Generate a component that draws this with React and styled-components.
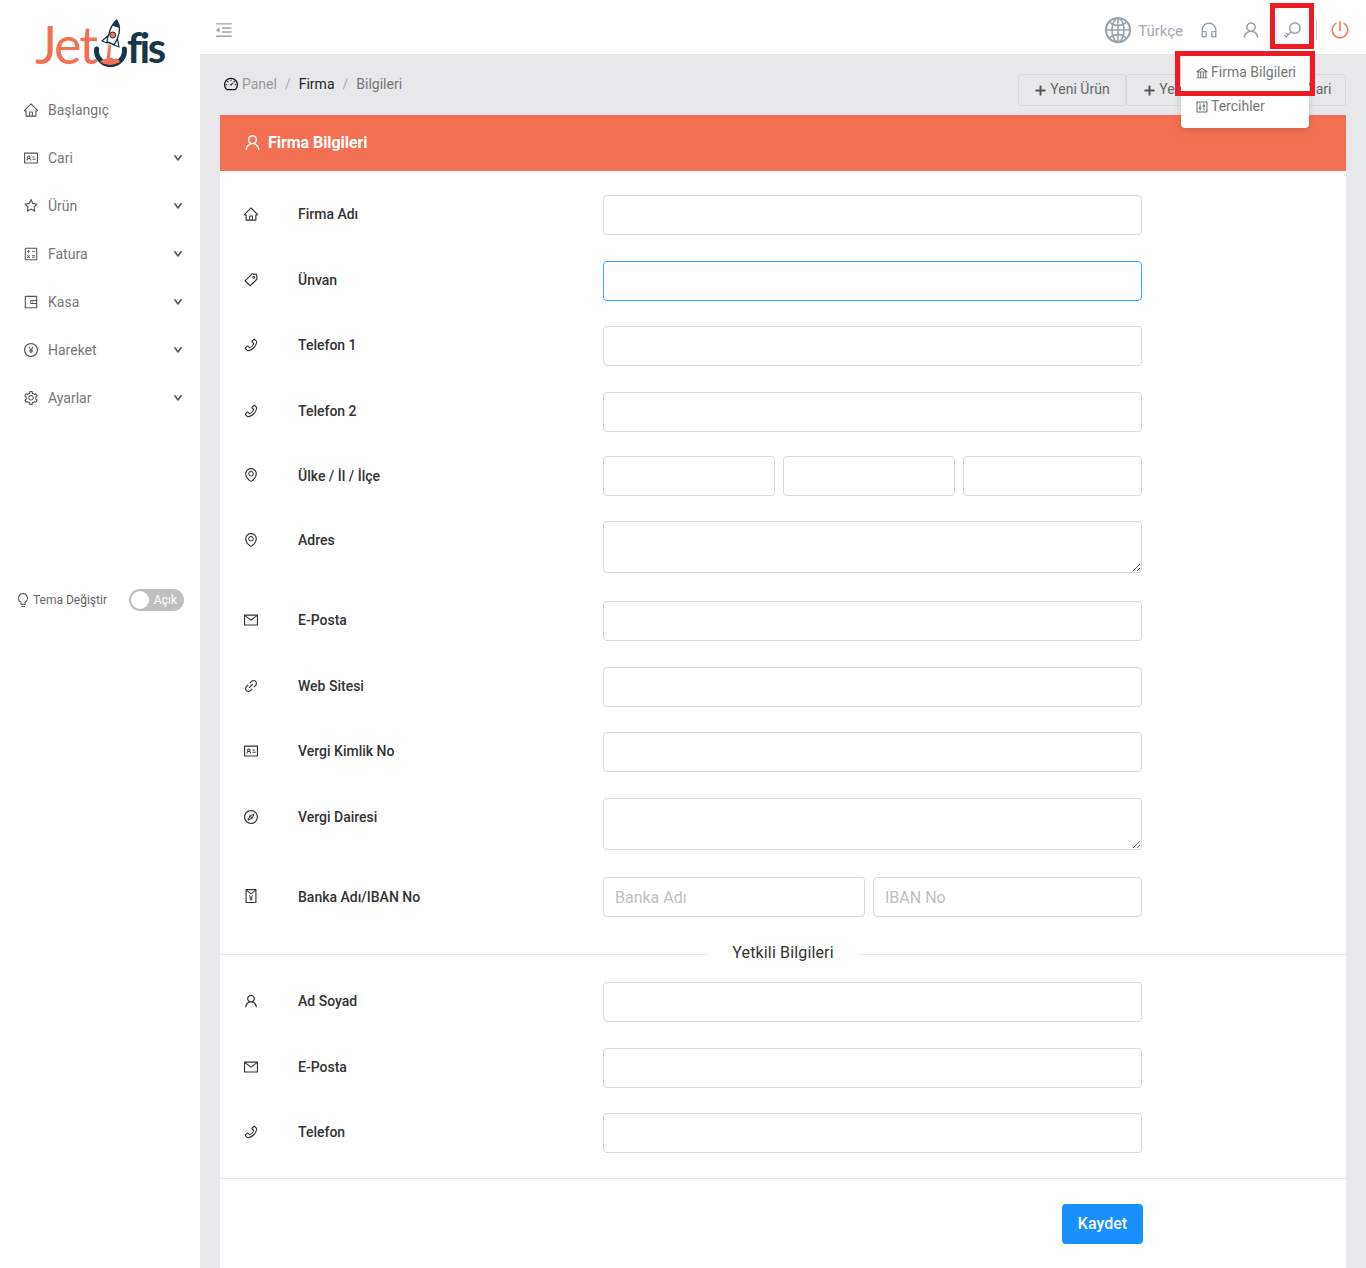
import React from 'react';
import styled, { createGlobalStyle } from 'styled-components';
import {
  AiOutlineHome,
  AiOutlineIdcard,
  AiOutlineStar,
  AiOutlineCalculator,
  AiOutlineWallet,
  AiOutlinePayCircle,
  AiOutlineSetting,
  AiOutlineBulb,
  AiOutlineDashboard,
  AiOutlineUser,
  AiOutlineTag,
  AiOutlinePhone,
  AiOutlineEnvironment,
  AiOutlineMail,
  AiOutlineLink,
  AiOutlineCompass,
  AiOutlineRedEnvelope,
  AiOutlineGlobal,
  AiOutlineCustomerService,
  AiOutlineKey,
  AiOutlinePoweroff,
  AiOutlineBank,
  AiOutlineControl,
  AiOutlineMenuFold,
  AiOutlinePlus,
  AiOutlineDown,
} from 'react-icons/ai';

const GlobalStyle = createGlobalStyle`
  html, body {
    margin: 0;
    height: 1268px;
    overflow: hidden;
    background: #e7e8ea;
    font-family: Roboto, "Liberation Sans", sans-serif;
  }
  * { box-sizing: border-box; }
`;

const Shell = styled.div`
  display: flex;
  height: 1268px;
  overflow: hidden;
  position: relative;
`;

const Sidebar = styled.aside`
  width: 200px;
  flex: none;
  background: #fff;
`;

const LogoWrap = styled.div`
  height: 86px;
  display: flex;
  align-items: flex-start;
  padding: 18px 0 0 35px;
`;

const LogoWord = styled.span`
  font-family: Lato, sans-serif;
  font-size: ${(p) => (p.$dark ? 42 : 52)}px;
  line-height: 58px;
  font-weight: ${(p) => (p.$dark ? 700 : 400)};
  color: ${(p) => (p.$dark ? '#17384a' : '#f47053')};
  letter-spacing: ${(p) => (p.$dark ? '-2.5px' : '-2px')};
  margin-top: ${(p) => (p.$dark ? -0.5 : -3)}px;
  margin-left: ${(p) => (p.$dark ? -2 : 0)}px;
`;

const LogoMark = styled.svg`
  width: 36px;
  height: 52px;
  flex: none;
  margin-left: -3px;
`;

const NavItem = styled.div`
  height: 48px;
  display: flex;
  align-items: center;
  padding: 0 16px 0 23px;
  font-size: 14px;
  color: #777;
  svg:first-child {
    font-size: 16px;
    color: #555;
    margin-right: 9px;
  }
`;

const NavLabel = styled.span`
  flex: 1;
`;

const Chevron = styled(AiOutlineDown)`
  font-size: 10px;
  color: #555;
  stroke: #555;
  stroke-width: 100;
  margin-right: 1px;
`;

const ThemeRow = styled.div`
  display: flex;
  align-items: center;
  margin-top: 167px;
  padding: 0 16px 0 17px;
  font-size: 12px;
  color: #666;
  svg {
    font-size: 16px;
    margin-left: -2px;
    margin-right: 2px;
  }
`;

const ThemeLabel = styled.span`
  flex: 1;
`;

const Toggle = styled.div`
  width: 55px;
  height: 22px;
  border-radius: 11px;
  background: #bfbfbf;
  color: #fff;
  display: flex;
  align-items: center;
  justify-content: space-between;
  padding: 0 7px 0 2px;
`;

const ToggleThumb = styled.span`
  width: 18px;
  height: 18px;
  border-radius: 50%;
  background: #fff;
`;

const Main = styled.div`
  flex: 1;
  min-width: 0;
`;

const TopBar = styled.header`
  height: 54px;
  background: #fff;
  display: flex;
  align-items: center;
  padding: 6px 7px 0 14px;
`;

const TopBarSpacer = styled.div`
  flex: 1;
`;

const TopIcon = styled.span`
  display: flex;
  align-items: center;
  justify-content: center;
  width: ${(p) => p.$w || 42}px;
  font-size: ${(p) => p.$size || 20}px;
  color: ${(p) => p.$color || '#9aa3ad'};
`;

const LangText = styled.span`
  font-size: 15px;
  color: #a3abb5;
  margin: 1px 5px 0 5px;
`;

const VLine = styled.span`
  width: 1px;
  height: 20px;
  background: #c4c8cc;
  margin: 0 4px 0 2px;
`;

const Content = styled.div`
  padding: 20px 20px 0 20px;
`;

const CrumbRow = styled.div`
  height: 41px;
  display: flex;
  justify-content: space-between;
  align-items: flex-start;
`;

const Crumbs = styled.div`
  display: flex;
  align-items: center;
  height: 20px;
  padding-left: 3px;
  font-size: 14px;
  color: #999;
  svg {
    font-size: 16px;
    color: #111;
    margin-right: 3px;
  }
`;

const CrumbSep = styled.span`
  margin: 0 8px;
  color: #aaa;
`;

const Crumb = styled.span`
  color: ${(p) => p.$color || '#999'};
`;

const ActionGroup = styled.div`
  display: flex;
`;

const ActionButton = styled.div`
  height: 32px;
  width: ${(p) => p.$w}px;
  display: flex;
  align-items: center;
  justify-content: center;
  gap: 3px;
  padding-bottom: 2px;
  border: 1px solid #d9d9d9;
  border-radius: 3px;
  font-size: 14px;
  color: #666;
  svg {
    font-size: 13px;
    color: #555;
    stroke: #555;
    stroke-width: 80;
    margin-top: 2px;
  }
`;

const Card = styled.section`
  background: #fff;
  height: 1153px;
`;

const CardHead = styled.div`
  height: 56px;
  background: #f47053;
  color: #fff;
  display: flex;
  align-items: center;
  gap: 6px;
  padding: 0 0 2px 23px;
  font-size: 16px;
  font-weight: 700;
  letter-spacing: -0.05px;
  svg {
    font-size: 19px;
  }
`;

const CardBody = styled.div`
  padding-top: 24px;
`;

const Row = styled.div`
  display: grid;
  grid-template-columns: 61px 322px 539px;
  align-items: start;
  margin-bottom: ${(p) => p.$mb}px;
`;

const RowIcon = styled.span`
  height: 38px;
  display: flex;
  align-items: center;
  justify-content: center;
  font-size: 16px;
  color: #333;
`;

const RowLabel = styled.label`
  height: ${(p) => (p.$tall ? 40 : 38)}px;
  display: flex;
  align-items: center;
  padding-left: 17px;
  font-size: 14px;
  font-weight: 500;
  color: #333;
`;

const Fields = styled.div`
  display: flex;
  gap: 8px;
`;

const Input = styled.input`
  width: ${(p) => (p.$w ? `${p.$w}px` : '100%')};
  flex: ${(p) => (p.$w ? 'none' : 1)};
  min-width: 0;
  height: 40px;
  border: 1px solid ${(p) => (p.$active ? '#40a9ff' : '#d9d9d9')};
  border-radius: 4px;
  padding: 0 11px;
  outline: none;
  background: #fff;
  font-family: inherit;
  font-size: 16px;
  color: #333;
  &::placeholder {
    color: #bfbfbf;
  }
`;

const TextArea = styled.textarea`
  display: block;
  width: 100%;
  height: 52px;
  border: 1px solid #d9d9d9;
  border-radius: 4px;
  outline: none;
  resize: vertical;
  font-family: inherit;
`;

const Divider = styled.div`
  height: 24px;
  display: flex;
  align-items: center;
  gap: 24px;
  margin-bottom: 16px;
  font-size: 16px;
  letter-spacing: 0.15px;
  color: #333;
  &::before,
  &::after {
    content: '';
    flex: 1;
    height: 1px;
    background: #e8e8e8;
  }
`;

const DividerText = styled.span`
  margin-top: -4px;
`;

const CardFoot = styled.div`
  border-top: 1px solid #e8e8e8;
  display: flex;
  justify-content: flex-end;
  padding: 25px 203px 0 0;
`;

const SaveButton = styled.button`
  width: 81px;
  height: 40px;
  border: 0;
  border-radius: 4px;
  padding: 0 0 2px;
  background: #1890ff;
  color: #fff;
  font-family: inherit;
  font-size: 16px;
  font-weight: 500;
`;

const Dropdown = styled.div`
  position: absolute;
  left: 1181px;
  top: 54px;
  width: 128px;
  height: 74px;
  background: #fff;
  border-radius: 0 0 4px 4px;
  box-shadow: 0 2px 8px rgba(0, 0, 0, 0.15);
  padding-top: 1px;
`;

const DropItem = styled.div`
  height: 34px;
  display: flex;
  align-items: center;
  gap: 2px;
  padding-left: 14px;
  font-size: 14px;
  color: #777;
  svg {
    font-size: 14px;
    color: #666;
    margin-top: 2px;
  }
`;

const Annotation = styled.div`
  position: absolute;
  left: ${(p) => p.$x}px;
  top: ${(p) => p.$y}px;
  width: ${(p) => p.$w}px;
  height: ${(p) => p.$h}px;
  border: 5px solid #ed1c24;
`;

const navItems = [
  { icon: AiOutlineHome, label: 'Başlangıç' },
  { icon: AiOutlineIdcard, label: 'Cari', sub: true },
  { icon: AiOutlineStar, label: 'Ürün', sub: true },
  { icon: AiOutlineCalculator, label: 'Fatura', sub: true },
  { icon: AiOutlineWallet, label: 'Kasa', sub: true },
  { icon: AiOutlinePayCircle, label: 'Hareket', sub: true },
  { icon: AiOutlineSetting, label: 'Ayarlar', sub: true },
];

const companyRows = [
  { icon: AiOutlineHome, label: 'Firma Adı', mb: 26 },
  { icon: AiOutlineTag, label: 'Ünvan', mb: 25, active: true },
  { icon: AiOutlinePhone, label: 'Telefon 1', mb: 26 },
  { icon: AiOutlinePhone, label: 'Telefon 2', mb: 24 },
  { icon: AiOutlineEnvironment, label: 'Ülke / İl / İlçe', mb: 25, kind: 'triple' },
  { icon: AiOutlineEnvironment, label: 'Adres', mb: 28, kind: 'area' },
  { icon: AiOutlineMail, label: 'E-Posta', mb: 26 },
  { icon: AiOutlineLink, label: 'Web Sitesi', mb: 25 },
  { icon: AiOutlineIdcard, label: 'Vergi Kimlik No', mb: 26 },
  { icon: AiOutlineCompass, label: 'Vergi Dairesi', mb: 27, kind: 'area' },
  { icon: AiOutlineRedEnvelope, label: 'Banka Adı/IBAN No', mb: 25, kind: 'bank' },
];

const contactRows = [
  { icon: AiOutlineUser, label: 'Ad Soyad', mb: 26 },
  { icon: AiOutlineMail, label: 'E-Posta', mb: 25 },
  { icon: AiOutlinePhone, label: 'Telefon', mb: 25 },
];

function FormRow({ row }) {
  const Icon = row.icon;
  return (
    <Row $mb={row.mb}>
      <RowIcon>
        <Icon />
      </RowIcon>
      <RowLabel $tall={row.kind === 'triple' || row.kind === 'bank'}>{row.label}</RowLabel>
      {row.kind === 'triple' && (
        <Fields>
          <Input $w={172} />
          <Input $w={172} />
          <Input />
        </Fields>
      )}
      {row.kind === 'bank' && (
        <Fields>
          <Input $w={262} placeholder="Banka Adı" />
          <Input placeholder="IBAN No" />
        </Fields>
      )}
      {row.kind === 'area' && <TextArea />}
      {!row.kind && <Input $active={row.active} />}
    </Row>
  );
}

export default function App() {
  return (
    <Shell>
      <GlobalStyle />
      <Sidebar>
        <LogoWrap>
          <LogoWord>Jet</LogoWord>
          <LogoMark viewBox="0 0 36 52">
            <path d="M3.6 31 A14 14 0 1 0 31.4 31" fill="none" stroke="#17384a" strokeWidth="5" strokeLinecap="round" />
            <path d="M7 44 Q11 40 14 41 Q18 38 21 41 Q25 39 27 44 Q17 50 7 44Z" fill="#f47053" />
            <path d="M15.5 26 L13.5 41 L17 41 L18 27Z" fill="#f47053" />
            <path d="M23.5 2 Q29 10 24.5 20 L22 27 L13 23.5 L16 16 Q18 7 23.5 2Z" fill="#fff" stroke="#17384a" strokeWidth="1.4" strokeLinejoin="round" />
            <path d="M23.5 2 Q26.5 6 26.4 10 L19 7.5 Q21 4 23.5 2Z" fill="#17384a" />
            <circle cx="19.8" cy="17" r="3" fill="#f47053" stroke="#17384a" strokeWidth="1" />
            <path d="M14.5 18 L9 23 L14 25Z M24.5 21 L26 29 L21 27Z" fill="#fff" stroke="#17384a" strokeWidth="1.3" strokeLinejoin="round" />
          </LogoMark>
          <LogoWord $dark>fis</LogoWord>
        </LogoWrap>
        {navItems.map((item) => {
          const Icon = item.icon;
          return (
            <NavItem key={item.label}>
              <Icon />
              <NavLabel>{item.label}</NavLabel>
              {item.sub && <Chevron />}
            </NavItem>
          );
        })}
        <ThemeRow>
          <AiOutlineBulb />
          <ThemeLabel>Tema Değiştir</ThemeLabel>
          <Toggle>
            <ToggleThumb />
            Açık
          </Toggle>
        </ThemeRow>
      </Sidebar>

      <Main>
        <TopBar>
          <TopIcon $w={20} $size={20}>
            <AiOutlineMenuFold />
          </TopIcon>
          <TopBarSpacer />
          <TopIcon $w={30} $size={30}>
            <AiOutlineGlobal />
          </TopIcon>
          <LangText>Türkçe</LangText>
          <TopIcon $w={42}>
            <AiOutlineCustomerService />
          </TopIcon>
          <TopIcon $w={42}>
            <AiOutlineUser />
          </TopIcon>
          <TopIcon $w={42}>
            <AiOutlineKey />
          </TopIcon>
          <VLine />
          <TopIcon $w={38} $color="#f47053">
            <AiOutlinePoweroff />
          </TopIcon>
        </TopBar>

        <Content>
          <CrumbRow>
            <Crumbs>
              <AiOutlineDashboard />
              <Crumb>Panel</Crumb>
              <CrumbSep>/</CrumbSep>
              <Crumb $color="#222">Firma</Crumb>
              <CrumbSep>/</CrumbSep>
              <Crumb $color="#777">Bilgileri</Crumb>
            </Crumbs>
            <ActionGroup>
              <ActionButton $w={108}>
                <AiOutlinePlus />
                Yeni Ürün
              </ActionButton>
              <ActionButton $w={120}>
                <AiOutlinePlus />
                Yeni Fatura
              </ActionButton>
              <ActionButton $w={100}>
                <AiOutlinePlus />
                Yeni Cari
              </ActionButton>
            </ActionGroup>
          </CrumbRow>

          <Card>
            <CardHead>
              <AiOutlineUser />
              Firma Bilgileri
            </CardHead>
            <CardBody>
              {companyRows.map((row) => (
                <FormRow key={row.label} row={row} />
              ))}
              <Divider>
                <DividerText>Yetkili Bilgileri</DividerText>
              </Divider>
              {contactRows.map((row) => (
                <FormRow key={row.label} row={row} />
              ))}
              <CardFoot>
                <SaveButton>Kaydet</SaveButton>
              </CardFoot>
            </CardBody>
          </Card>
        </Content>
      </Main>

      <Dropdown>
        <DropItem>
          <AiOutlineBank />
          Firma Bilgileri
        </DropItem>
        <DropItem>
          <AiOutlineControl />
          Tercihler
        </DropItem>
      </Dropdown>
      <Annotation $x={1270} $y={3} $w={44} $h={46} />
      <Annotation $x={1175} $y={51} $w={140} $h={45} />
    </Shell>
  );
}
